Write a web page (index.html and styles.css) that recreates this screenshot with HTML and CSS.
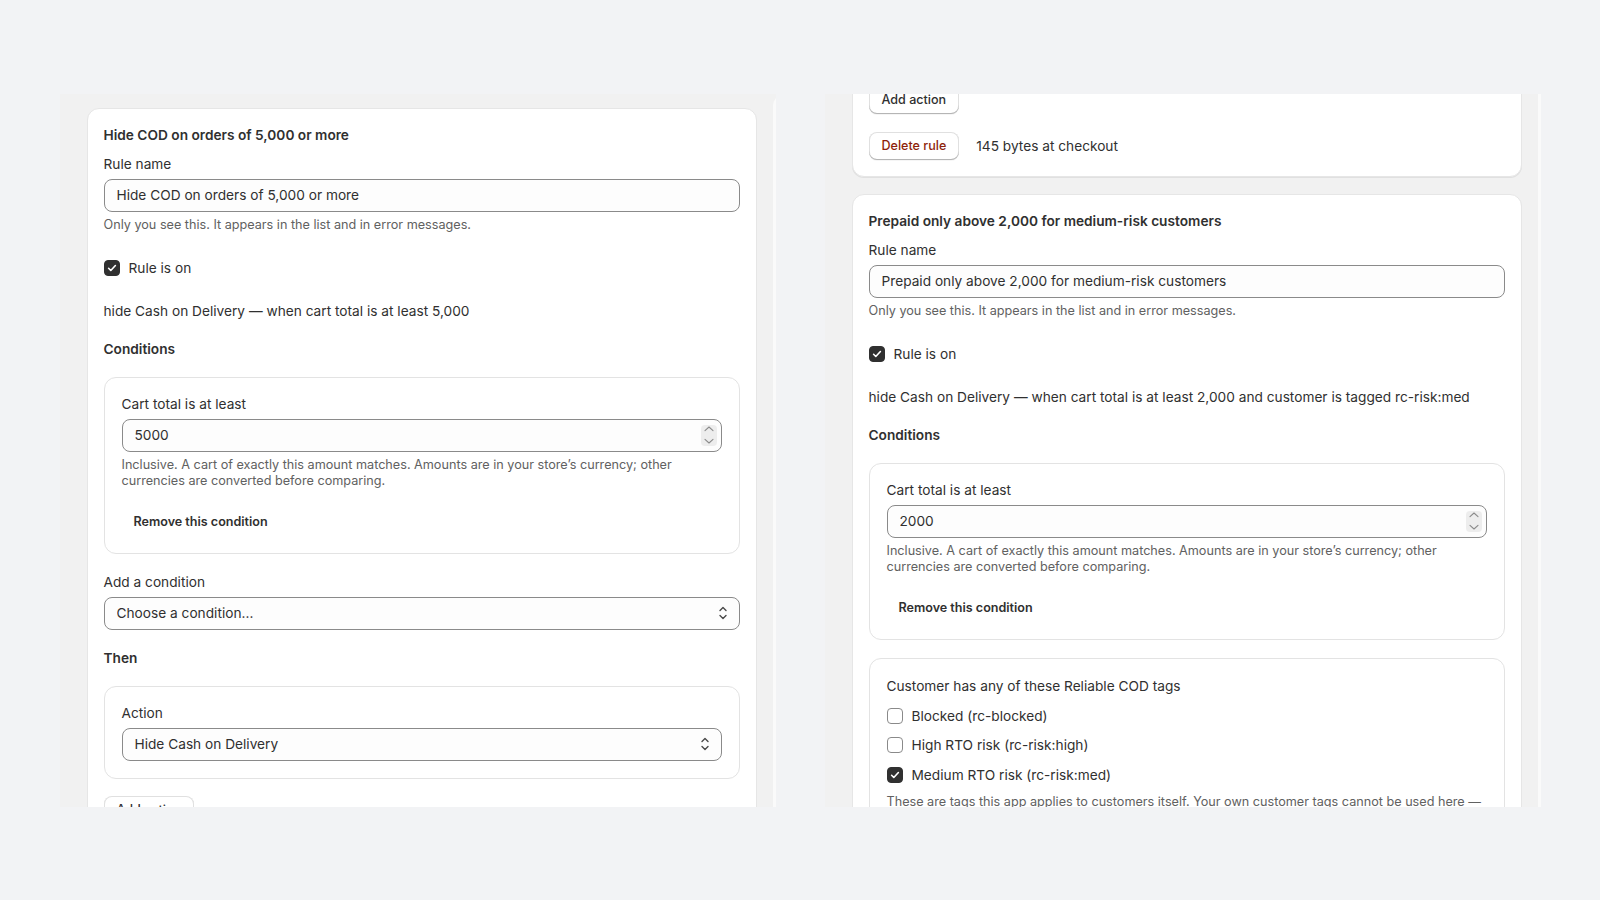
FILE: index.html
```html
<!DOCTYPE html>
<html lang="en">
<head>
<meta charset="utf-8">
<title>Checkout rules</title>
<link rel="stylesheet" href="styles.css">
</head>
<body>
<main class="stage">

  <!-- first view: top of the rules list -->
  <section class="viewport">
    <div class="page">
      <div class="col">

        <article class="card">
          <h2 class="title">Hide COD on orders of 5,000 or more</h2>
          <div class="field">
            <label class="field__label">Rule name</label>
            <div class="control"><input class="control__input" type="text" value="Hide COD on orders of 5,000 or more"></div>
            <p class="help">Only you see this. It appears in the list and in error messages.</p>
          </div>
          <div class="check-row">
            <span class="check check--on"><svg viewBox="0 0 16 16" width="16" height="16"><path d="M4.6 8.3l2.2 2.2 4.6-5" fill="none" stroke="#fff" stroke-width="1.6" stroke-linecap="round" stroke-linejoin="round"/></svg></span>
            <span>Rule is on</span>
          </div>
          <p class="summary">hide Cash on Delivery — when cart total is at least 5,000</p>
          <h3 class="heading">Conditions</h3>
          <div class="box">
            <label class="field__label">Cart total is at least</label>
            <div class="control control--number">
              <input class="control__input" type="text" value="5000">
              <span class="spin"><svg viewBox="0 0 16 21" width="16" height="21"><path d="M4 5.6 8 2l4 3.6M4 14.4 8 18l4-3.6" fill="none" stroke="#8a8a8a" stroke-width="1.1" stroke-linecap="round" stroke-linejoin="round"/></svg></span>
            </div>
            <p class="help help--wrap">Inclusive. A cart of exactly this amount matches. Amounts are in your store’s currency; other currencies are converted before comparing.</p>
            <button class="btn-plain" type="button">Remove this condition</button>
          </div>
          <div class="field field--spaced">
            <label class="field__label">Add a condition</label>
            <div class="control control--select">
              <select class="control__select"><option>Choose a condition...</option></select>
              <svg class="select-icon" viewBox="0 0 16 16" width="16" height="16"><path d="M5 5.5 8 2.5l3 3M5 10.5l3 3 3-3" fill="none" stroke="#4a4a4a" stroke-width="1.4" stroke-linecap="round" stroke-linejoin="round"/></svg>
            </div>
          </div>
          <h3 class="heading">Then</h3>
          <div class="box">
            <label class="field__label">Action</label>
            <div class="control control--select">
              <select class="control__select"><option>Hide Cash on Delivery</option></select>
              <svg class="select-icon" viewBox="0 0 16 16" width="16" height="16"><path d="M5 5.5 8 2.5l3 3M5 10.5l3 3 3-3" fill="none" stroke="#4a4a4a" stroke-width="1.4" stroke-linecap="round" stroke-linejoin="round"/></svg>
            </div>
          </div>
          <button class="btn btn--add" type="button">Add action</button>
          <div class="footer-row">
            <button class="btn btn--danger" type="button">Delete rule</button>
            <span>145 bytes at checkout</span>
          </div>
        </article>

        <article class="card">
          <h2 class="title">Prepaid only above 2,000 for medium-risk customers</h2>
        </article>

      </div>
      <div class="peek"></div>
    </div>
  </section>

  <!-- second view: the same list scrolled further down -->
  <section class="viewport">
    <div class="page page--scrolled">
      <div class="col">

        <article class="card">
          <h2 class="title">Hide COD on orders of 5,000 or more</h2>
          <div class="field">
            <label class="field__label">Rule name</label>
            <div class="control"><input class="control__input" type="text" value="Hide COD on orders of 5,000 or more"></div>
            <p class="help">Only you see this. It appears in the list and in error messages.</p>
          </div>
          <div class="check-row">
            <span class="check check--on"><svg viewBox="0 0 16 16" width="16" height="16"><path d="M4.6 8.3l2.2 2.2 4.6-5" fill="none" stroke="#fff" stroke-width="1.6" stroke-linecap="round" stroke-linejoin="round"/></svg></span>
            <span>Rule is on</span>
          </div>
          <p class="summary">hide Cash on Delivery — when cart total is at least 5,000</p>
          <h3 class="heading">Conditions</h3>
          <div class="box">
            <label class="field__label">Cart total is at least</label>
            <div class="control control--number">
              <input class="control__input" type="text" value="5000">
              <span class="spin"><svg viewBox="0 0 16 21" width="16" height="21"><path d="M4 5.6 8 2l4 3.6M4 14.4 8 18l4-3.6" fill="none" stroke="#8a8a8a" stroke-width="1.1" stroke-linecap="round" stroke-linejoin="round"/></svg></span>
            </div>
            <p class="help help--wrap">Inclusive. A cart of exactly this amount matches. Amounts are in your store’s currency; other currencies are converted before comparing.</p>
            <button class="btn-plain" type="button">Remove this condition</button>
          </div>
          <div class="field field--spaced">
            <label class="field__label">Add a condition</label>
            <div class="control control--select">
              <select class="control__select"><option>Choose a condition...</option></select>
              <svg class="select-icon" viewBox="0 0 16 16" width="16" height="16"><path d="M5 5.5 8 2.5l3 3M5 10.5l3 3 3-3" fill="none" stroke="#4a4a4a" stroke-width="1.4" stroke-linecap="round" stroke-linejoin="round"/></svg>
            </div>
          </div>
          <h3 class="heading">Then</h3>
          <div class="box">
            <label class="field__label">Action</label>
            <div class="control control--select">
              <select class="control__select"><option>Hide Cash on Delivery</option></select>
              <svg class="select-icon" viewBox="0 0 16 16" width="16" height="16"><path d="M5 5.5 8 2.5l3 3M5 10.5l3 3 3-3" fill="none" stroke="#4a4a4a" stroke-width="1.4" stroke-linecap="round" stroke-linejoin="round"/></svg>
            </div>
          </div>
          <button class="btn btn--add" type="button">Add action</button>
          <div class="footer-row">
            <button class="btn btn--danger" type="button">Delete rule</button>
            <span>145 bytes at checkout</span>
          </div>
        </article>

        <article class="card">
          <h2 class="title">Prepaid only above 2,000 for medium-risk customers</h2>
          <div class="field">
            <label class="field__label">Rule name</label>
            <div class="control"><input class="control__input" type="text" value="Prepaid only above 2,000 for medium-risk customers"></div>
            <p class="help">Only you see this. It appears in the list and in error messages.</p>
          </div>
          <div class="check-row">
            <span class="check check--on"><svg viewBox="0 0 16 16" width="16" height="16"><path d="M4.6 8.3l2.2 2.2 4.6-5" fill="none" stroke="#fff" stroke-width="1.6" stroke-linecap="round" stroke-linejoin="round"/></svg></span>
            <span>Rule is on</span>
          </div>
          <p class="summary">hide Cash on Delivery — when cart total is at least 2,000 and customer is tagged rc-risk:med</p>
          <h3 class="heading">Conditions</h3>
          <div class="box">
            <label class="field__label">Cart total is at least</label>
            <div class="control control--number">
              <input class="control__input" type="text" value="2000">
              <span class="spin"><svg viewBox="0 0 16 21" width="16" height="21"><path d="M4 5.6 8 2l4 3.6M4 14.4 8 18l4-3.6" fill="none" stroke="#8a8a8a" stroke-width="1.1" stroke-linecap="round" stroke-linejoin="round"/></svg></span>
            </div>
            <p class="help help--wrap">Inclusive. A cart of exactly this amount matches. Amounts are in your store’s currency; other currencies are converted before comparing.</p>
            <button class="btn-plain" type="button">Remove this condition</button>
          </div>
          <div class="box box--tags">
            <label class="field__label">Customer has any of these Reliable COD tags</label>
            <div class="tag-list">
              <div class="tag-row"><span class="check"></span><span>Blocked (rc-blocked)</span></div>
              <div class="tag-row"><span class="check"></span><span>High RTO risk (rc-risk:high)</span></div>
              <div class="tag-row"><span class="check check--on"><svg viewBox="0 0 16 16" width="16" height="16"><path d="M4.6 8.3l2.2 2.2 4.6-5" fill="none" stroke="#fff" stroke-width="1.6" stroke-linecap="round" stroke-linejoin="round"/></svg></span><span>Medium RTO risk (rc-risk:med)</span></div>
            </div>
            <p class="help help--wrap help--tags">These are tags this app applies to customers itself. Your own customer tags cannot be used here — checkout can only read tags that this app manages.</p>
          </div>
        </article>

      </div>
      <div class="peek"></div>
    </div>
  </section>

</main>
</body>
</html>
```

FILE: styles.css
```css
* {
  box-sizing: border-box;
}

html,
body {
  margin: 0;
  height: 100%;
}

body {
  display: flex;
  align-items: center;
  justify-content: center;
  background: #f2f3f5;
  color: #303030;
  font-family: Inter, "Noto Sans", "Liberation Sans", sans-serif;
  font-size: 13.7px;
  line-height: 20px;
}

p,
h2,
h3 {
  margin: 0;
}

/* two framed views side by side */
.stage {
  display: flex;
  gap: 49px;
}

.viewport {
  width: 716px;
  height: 713px;
  overflow: hidden;
  background: #f1f1f1;
}

.page {
  display: flex;
  align-items: stretch;
  gap: 16px;
  padding: 14px 0 0 27px;
}

.page--scrolled {
  margin-top: -710px;
}

.col {
  flex: 0 0 670px;
  display: flex;
  flex-direction: column;
  gap: 17px;
}

/* edge of the next column of cards */
.peek {
  flex: 0 0 670px;
  margin-top: -14px;
  background: #fafafa;
  border-radius: 12px;
}

/* rule card */
.card {
  display: flex;
  flex-direction: column;
  background: #fff;
  border: 1px solid #e6e6e6;
  border-radius: 12px;
  padding: 16px;
  box-shadow: 0 1px 0 rgba(26, 26, 26, 0.08);
}

.title {
  font-size: 13.7px;
  font-weight: 600;
  line-height: 20px;
}

.field {
  margin-top: 9px;
}

.field--spaced {
  margin-top: 18px;
}

.field__label {
  display: block;
}

.control {
  display: flex;
  align-items: center;
  height: 33px;
  margin-top: 5px;
  padding: 0 12px;
  background: #fdfdfd;
  border: 1px solid #8a8a8a;
  border-radius: 8px;
}

.control__input,
.control__select {
  flex: 1;
  min-width: 0;
  padding: 0;
  border: 0;
  outline: 0;
  background: transparent;
  color: #303030;
  font: inherit;
  appearance: none;
}

.control--number {
  padding-right: 4px;
}

.spin {
  display: flex;
  width: 16px;
  height: 21px;
  margin-top: 1px;
  background: #ededed;
  border-radius: 4px;
}

.control--select {
  padding-right: 8px;
}

.select-icon {
  flex: none;
}

.help {
  margin-top: 5px;
  color: #616161;
  font-size: 12.65px;
  line-height: 16px;
}

.help--wrap {
  line-height: 16.6px;
}

.check-row {
  display: flex;
  align-items: center;
  gap: 9px;
  margin-top: 25px;
}

.check {
  flex: none;
  display: flex;
  width: 16px;
  height: 16px;
  background: #fff;
  border: 1px solid #8a8a8a;
  border-radius: 4px;
}

.check--on {
  background: #303030;
  border-color: #303030;
}

.check--on svg {
  margin: -1px;
}

.summary {
  margin-top: 23px;
}

.heading {
  margin-top: 18px;
  font-size: 13.7px;
  font-weight: 600;
  line-height: 20px;
}

/* bordered group inside a card */
.box {
  margin-top: 18px;
  padding: 16px 17px 17px;
  border: 1px solid #e3e3e3;
  border-radius: 12px;
}

.box--tags {
  padding-top: 17px;
}

.btn-plain {
  display: block;
  height: 28px;
  margin-top: 18px;
  padding: 0 12px;
  border: 0;
  background: none;
  color: #303030;
  font: 600 12.55px/16px Inter, "Noto Sans", sans-serif;
}

.btn {
  height: 28px;
  padding: 0 13px;
  border: 0;
  border-radius: 8px;
  background: #fff;
  color: #303030;
  font: 500 12.55px/16px Inter, "Noto Sans", sans-serif;
  box-shadow: inset 0 -1px 0 #b5b5b5, inset 0 0 0 1px #e0e0e0, 0 1px 0 rgba(0, 0, 0, 0.04);
}

.btn--add {
  align-self: flex-start;
  margin-top: 17px;
}

.btn--danger {
  color: #8e1f0b;
}

.footer-row {
  display: flex;
  align-items: center;
  gap: 17px;
  margin-top: 18px;
}

/* customer tag choices */
.tag-list {
  display: flex;
  flex-direction: column;
  gap: 9.3px;
  margin-top: 10.3px;
}

.tag-row {
  display: flex;
  align-items: center;
  gap: 9px;
}

.help--tags {
  margin-top: 9px;
}
```
